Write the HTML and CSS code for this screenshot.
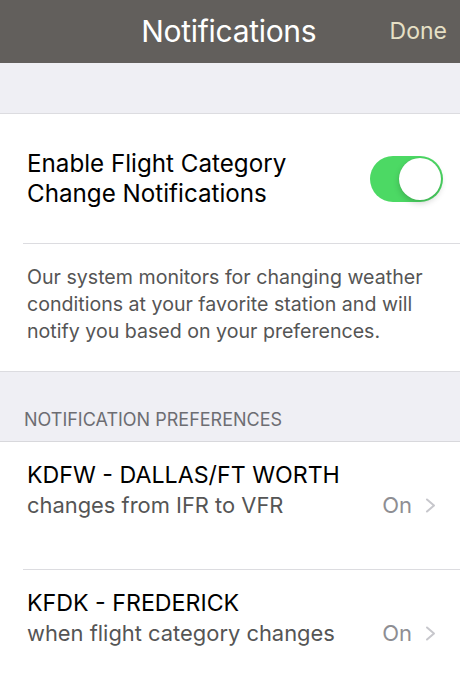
FILE: index.html
```html
<!DOCTYPE html>
<html lang="en">
<head>
  <meta charset="UTF-8" />
  <meta name="viewport" content="width=device-width, initial-scale=1.0" />
  <title>Notifications</title>
  <link rel="stylesheet" href="styles.css">
</head>
<body>
  <div class="navbar">
    <span class="nav-spacer"></span>
    <h1 class="nav-title">Notifications</h1>
    <span class="nav-done">Done</span>
  </div>

  <div class="gap"></div>

  <div class="group">
    <div class="toggle-row">
      <div class="toggle-label">Enable Flight Category<br>Change Notifications</div>
      <div class="switch on"><span class="knob"></span></div>
    </div>
    <p class="description">Our system monitors for changing weather conditions at your favorite station and will notify you based on your preferences.</p>
  </div>

  <div class="section-header">NOTIFICATION PREFERENCES</div>

  <div class="group">
    <div class="pref-row">
      <div class="pref-text">
        <div class="pref-title">KDFW - DALLAS/FT WORTH</div>
        <div class="pref-sub">changes from IFR to VFR</div>
      </div>
      <span class="pref-value">On</span>
      <svg class="chevron" width="12" height="15" viewBox="0 0 12 15"><path d="M2 1.5 L9 7.5 L2 13.5" fill="none" stroke="#c7c7cc" stroke-width="2" stroke-linecap="round" stroke-linejoin="round"/></svg>
    </div>
    <div class="pref-row">
      <div class="pref-text">
        <div class="pref-title">KFDK - FREDERICK</div>
        <div class="pref-sub">when flight category changes</div>
      </div>
      <span class="pref-value">On</span>
      <svg class="chevron" width="12" height="15" viewBox="0 0 12 15"><path d="M2 1.5 L9 7.5 L2 13.5" fill="none" stroke="#c7c7cc" stroke-width="2" stroke-linecap="round" stroke-linejoin="round"/></svg>
    </div>
  </div>
</body>
</html>
```

FILE: styles.css
```css
body {
  margin: 0;
  font-family: Inter, "Liberation Sans", sans-serif;
  background: #fff;
  color: #000;
  width: 460px;
  overflow: hidden;
}
.navbar {
  height: 63px;
  background: #625f5c;
  display: flex;
  align-items: center;
  justify-content: space-between;
  padding: 0 13px 0 0;
  box-sizing: border-box;
}
.nav-spacer {
  width: 56px;
}
.nav-title {
  margin: 0 0 0 12px;
  font-size: 30px;
  font-weight: 400;
  letter-spacing: -0.3px;
  color: #fff;
  padding-bottom: 2px;
}
.nav-done {
  font-size: 23px;
  color: #e6e0c6;
  padding-bottom: 2px;
}
.gap {
  height: 50px;
  background: #efeff4;
  border-bottom: 1px solid #dcdce0;
}
.toggle-row {
  display: flex;
  align-items: center;
  justify-content: space-between;
  margin-left: 23px;
  padding: 35px 17px 34px 4px;
  border-bottom: 1px solid #dcdce0;
}
.toggle-label {
  font-size: 24.2px;
  line-height: 30px;
}
.switch {
  width: 73px;
  height: 46px;
  border-radius: 23px;
  background: #4cd964;
  position: relative;
}
.knob {
  position: absolute;
  right: 2px;
  top: 2px;
  width: 42px;
  height: 42px;
  border-radius: 50%;
  background: #fff;
  box-shadow: 0 3px 6px rgba(0,0,0,0.18), 0 0 1px rgba(0,0,0,0.15);
}
.description {
  margin: 0;
  padding: 20px 20px 26px 27px;
  font-size: 19.6px;
  line-height: 27px;
  color: #555;
  border-bottom: 1px solid #dcdce0;
}
.section-header {
  background: #efeff4;
  padding: 37px 0 10px 24px;
  font-size: 18px;
  line-height: 22px;
  color: #6d6d72;
  border-bottom: 1px solid #d8d8dc;
}
.pref-row {
  display: flex;
  align-items: flex-start;
  margin-left: 23px;
  padding: 18px 23px 0 4px;
  height: 128px;
  box-sizing: border-box;
  border-bottom: 1px solid #dcdce0;
}
.pref-text {
  flex: 1;
}
.pref-title {
  font-size: 23.2px;
  line-height: 30px;
}
.pref-sub {
  font-size: 21.9px;
  line-height: 30px;
  color: #555;
}
.pref-value {
  font-size: 22px;
  line-height: 30px;
  color: #8e8e93;
  margin-top: 30px;
  margin-right: 13px;
}
.chevron {
  margin-top: 38px;
}
```
